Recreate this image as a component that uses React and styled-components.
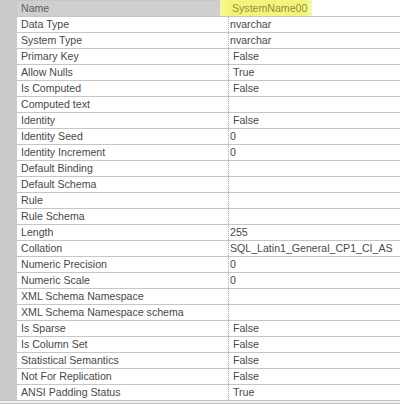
import React from "react";
import styled, { createGlobalStyle } from "styled-components";

const Global = createGlobalStyle`
  html, body { margin: 0; padding: 0; background: #ffffff; }
  body { font-family: "Liberation Sans", Arial, sans-serif; }
`;

const Frame = styled.div`
  width: 400px;
  height: 404px;
  display: flex;
  flex-direction: column;
  background: #ffffff;
  overflow: hidden;
`;

const Body = styled.div`
  display: flex;
  height: 400px;
`;

const Gutter = styled.div`
  width: 17px;
  flex: none;
  background: #c9c9c9;
`;

const Table = styled.div`
  flex: 1;
  display: flex;
  flex-direction: column;
`;

const Row = styled.div`
  display: grid;
  grid-template-columns: 211px 1fr;
  height: 16px;
  box-sizing: border-box;
  border-top: 1px solid #c6c6c6;
  font-size: 10.6px;
  line-height: 15px;
  color: #484848;
  background: ${(p) => (p.$header ? "#cfcfcf" : "#ffffff")};
`;

const Label = styled.div`
  padding-left: 4px;
  white-space: nowrap;
  overflow: hidden;
  color: ${(p) => (p.$header ? "#5e5e5e" : "#484848")};
`;

const Value = styled.div`
  border-left: 1px dotted #a8a8a8;
  padding-left: ${(p) => (p.$indent ? "4px" : "1px")};
  white-space: nowrap;
  overflow: hidden;
  background: #ffffff;
`;

const HeaderValue = styled.div`
  display: flex;
  background: #ffffff;
  margin-top: -1px;
  height: 16px;
`;

const Highlight = styled.span`
  margin-left: -8px;
  padding: 1px 5px 0 12px;
  height: 16px;
  box-sizing: border-box;
  background: linear-gradient(
    to right,
    #f6f7a6 0%,
    #f3f57a 8%,
    #f3f57a 92%,
    #f7f8b8 100%
  );
  color: #8f8f48;
  line-height: 15px;
`;

const Bottom = styled.div`
  height: 4px;
  box-sizing: border-box;
  border-top: 1px solid #c2c2c2;
  border-bottom: 1px solid #bdbdbd;
  background: #f2f2f2;
`;

const rows = [
  ["Data Type", "nvarchar"],
  ["System Type", "nvarchar"],
  ["Primary Key", "False", true],
  ["Allow Nulls", "True", true],
  ["Is Computed", "False", true],
  ["Computed text", ""],
  ["Identity", "False", true],
  ["Identity Seed", "0"],
  ["Identity Increment", "0"],
  ["Default Binding", ""],
  ["Default Schema", ""],
  ["Rule", ""],
  ["Rule Schema", ""],
  ["Length", "255"],
  ["Collation", "SQL_Latin1_General_CP1_CI_AS"],
  ["Numeric Precision", "0"],
  ["Numeric Scale", "0"],
  ["XML Schema Namespace", ""],
  ["XML Schema Namespace schema", ""],
  ["Is Sparse", "False", true],
  ["Is Column Set", "False", true],
  ["Statistical Semantics", "False", true],
  ["Not For Replication", "False", true],
  ["ANSI Padding Status", "True", true],
];

export default function App() {
  return (
    <>
      <Global />
      <Frame>
        <Body>
          <Gutter />
          <Table>
            <Row $header>
              <Label $header>Name</Label>
              <HeaderValue>
                <Highlight>SystemName00</Highlight>
              </HeaderValue>
            </Row>
            {rows.map(([k, v, indent]) => (
              <Row key={k}>
                <Label>{k}</Label>
                <Value $indent={indent}>{v}</Value>
              </Row>
            ))}
          </Table>
        </Body>
        <Bottom />
      </Frame>
    </>
  );
}
